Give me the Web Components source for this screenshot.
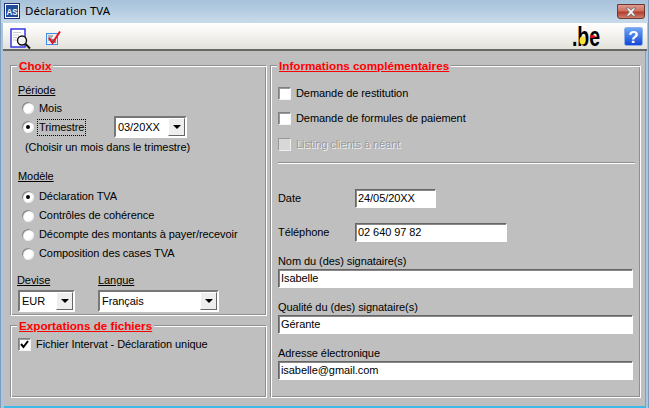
<!DOCTYPE html>
<html><head><meta charset="utf-8"><style>
html,body{margin:0;padding:0;width:649px;height:408px;overflow:hidden;background:#a9c6de}
</style></head><body>
<app-window>
  <title-bar slot="title" label="Déclaration TVA"></title-bar>
  <tool-bar slot="tools"></tool-bar>
  <div slot="left" style="display:flex;flex-direction:column;gap:9px;width:257px">
    <group-box label="Choix" style="height:251px">
      <sub-head style="margin-top:7px">Période</sub-head>
      <radio-opt style="margin-top:2px;height:16px">Mois</radio-opt>
      <div style="display:flex;align-items:center;height:22px">
        <radio-opt checked focused style="width:96px;flex:none">Trimestre</radio-opt>
        <combo-box value="03/20XX" style="width:73px;height:22px"></combo-box>
      </div>
      <div style="margin:2px 0 0 7px;height:15px;line-height:15px">(Choisir un mois dans le trimestre)</div>
      <sub-head style="margin-top:14px">Modèle</sub-head>
      <div style="margin-top:3px">
        <radio-opt checked style="height:19px">Déclaration TVA</radio-opt>
        <radio-opt style="height:19px">Contrôles de cohérence</radio-opt>
        <radio-opt style="height:19px">Décompte des montants à payer/recevoir</radio-opt>
        <radio-opt style="height:19px">Composition des cases TVA</radio-opt>
      </div>
      <div style="display:flex;margin:10px 0 0 -1px">
        <div style="width:81px"><sub-head>Devise</sub-head><combo-box value="EUR" style="width:57px;height:22px;margin:2px 0 0 1px"></combo-box></div>
        <div style="width:121px"><sub-head>Langue</sub-head><combo-box value="Français" style="width:121px;height:22px;margin-top:2px"></combo-box></div>
      </div>
    </group-box>
    <group-box label="Exportations de fichiers" style="height:73px">
      <check-opt checked style="margin-top:1px;height:15px">Fichier Intervat - Déclaration unique</check-opt>
    </group-box>
  </div>
  <group-box slot="right" label="Informations complémentaires" style="width:371px;height:333px">
    <div style="display:flex;flex-direction:column">
      <check-opt style="margin-top:5px;height:25px">Demande de restitution</check-opt>
      <check-opt style="height:25px">Demande de formules de paiement</check-opt>
      <check-opt disabled style="height:27px">Listing clients à néant</check-opt>
      <etched-line style="margin-top:4px;width:357px"></etched-line>
      <div style="display:flex;align-items:center;margin-top:25px;height:19px"><span style="width:77px">Date</span><text-field value="24/05/20XX" style="width:81px"></text-field></div>
      <div style="display:flex;align-items:center;margin-top:15px;height:19px"><span style="width:77px">Téléphone</span><text-field value="02 640 97 82" style="width:152px"></text-field></div>
      <div style="margin-top:11px;height:16px;line-height:16px">Nom du (des) signataire(s)</div>
      <text-field value="Isabelle" style="width:355px"></text-field>
      <div style="margin-top:11px;height:16px;line-height:16px">Qualité du (des) signataire(s)</div>
      <text-field value="Gérante" style="width:355px"></text-field>
      <div style="margin-top:11px;height:16px;line-height:16px">Adresse électronique</div>
      <text-field value="isabelle@gmail.com" style="width:355px"></text-field>
    </div>
  </group-box>
</app-window>
<script>
function def(name, css, html){
  customElements.define(name, class extends HTMLElement{
    connectedCallback(){
      if(this.shadowRoot) return;
      const s=this.attachShadow({mode:'open'});
      const a=n=>this.getAttribute(n)||'';
      s.innerHTML='<style>'+css+'</style>'+(typeof html==='function'?html(a,this):html);
    }
  });
}
def('app-window',`
 :host{display:block;width:649px;height:408px;font:11px/15px "Liberation Sans",Arial,sans-serif;letter-spacing:-.07px;color:#000;white-space:nowrap}
 .frame{display:flex;flex-direction:column;padding:0 2px 0 3px;background:#a9c6de;box-sizing:border-box;border-right:1px solid #7f9db8;border-left:1px solid #7f9db8;height:408px}
 .body{flex:1;min-height:0;background:#bfbfbf;padding:14px 4px 0 6px;display:flex;gap:3px;border-bottom:2px solid #3fb9e6;border-right:1px solid #3fb9e6}
`,`<div class="frame"><slot name="title"></slot><slot name="tools"></slot>
 <div class="body"><slot name="left"></slot><slot name="right"></slot></div></div>`);
def('title-bar',`
 :host{display:flex;align-items:center;height:23px;margin:0 -2px 0 -3px;padding:0 3px 1px 3px;box-sizing:border-box;background:linear-gradient(#a6c1d9,#c8dbea);position:relative}
 svg{display:block;flex:none}
 .t{margin-left:5px;font:11.5px/16px "Noto Sans","Open Sans",sans-serif;letter-spacing:0;color:#000}
 .x{position:absolute;right:3px;top:4px;width:28px;height:15px;border:1px solid #6b3a33;box-sizing:border-box;border-radius:0 0 3px 3px;background:linear-gradient(#dd9a8e 0,#d0705f 45%,#b33e2b 55%,#cf7f6d 100%);display:flex;align-items:center;justify-content:center}
`,a=>`<svg width="16" height="16" viewBox="0 0 16 16"><rect x=".5" y=".5" width="15" height="15" fill="#fff" stroke="#1b2f7a"/><rect x="2" y="2" width="12" height="12" fill="#1f4d9c"/><text x="8" y="11.5" text-anchor="middle" font-family="Liberation Sans" font-size="9" font-weight="bold" fill="#fff" textLength="11" lengthAdjust="spacingAndGlyphs">AS</text></svg>
 <span class="t">${a('label')}</span>
 <div class="x"><svg width="14" height="10" viewBox="0 0 14 10"><path d="M2 1h3l2 2.2L9 1h3L8.7 5 12 9H9L7 6.8 5 9H2l3.3-4z" fill="#f4f4f4" stroke="#6d6d6d" stroke-width=".8"/></svg></div>`);
def('tool-bar',`
 :host{display:flex;align-items:flex-start;height:28px;margin:0 -1px;padding:5px 4px 0 7px;box-sizing:border-box;background:linear-gradient(#fff 0,#f7f6f3 35%,#e3e1da 100%);border-bottom:2px solid #666}
 svg{flex:none;display:block}
 .sp{flex:1}
`,`<svg width="21" height="21" viewBox="0 0 21 21">
   <rect x="1" y="1" width="14" height="18" fill="#fff" stroke="#2a2ae0" stroke-width="1.4"/>
   <path d="M3.5 4.5h8M3.5 7h6M3.5 9.5h4M3.5 12h3" stroke="#999" stroke-dasharray="1 1"/>
   <circle cx="12" cy="12.5" r="4.5" fill="#f2f2f2" stroke="#111" stroke-width="1.4"/>
   <path d="M15.5 16l4.5 4.5" stroke="#111" stroke-width="2"/></svg>
 <svg width="16" height="16" viewBox="0 0 16 16" style="margin:2px 0 0 15px">
   <rect x=".5" y="3.5" width="11" height="11" fill="#eee" stroke="#3c8ce8"/>
   <path d="M2 6h5M2 8h4M2 10h3" stroke="#777"/><rect x="5" y="9" width="5" height="4" fill="#888"/>
   <path d="M3 8l3.5 5L14 1.5" fill="none" stroke="#e8102a" stroke-width="2"/></svg>
 <div class="sp"></div>
 <svg width="31" height="24" viewBox="0 0 31 24" style="margin:-3px 21px 0 0;overflow:visible">
   <text x="0" y="21" font-family="Liberation Sans" font-size="27" font-weight="bold" fill="#000" textLength="28" lengthAdjust="spacingAndGlyphs">.be</text>
   <ellipse cx="10.5" cy="15.5" rx="3" ry="4" fill="#f6e23c"/><ellipse cx="20.5" cy="11.5" rx="2.8" ry="1.6" fill="#e0102c"/></svg>
 <svg width="19" height="19" viewBox="0 0 19 19" style="margin-top:-1px">
   <defs><linearGradient id="h" x1="0" y1="0" x2="0" y2="1"><stop offset="0" stop-color="#6fa8f5"/><stop offset="1" stop-color="#1144d8"/></linearGradient></defs>
   <rect x=".5" y=".5" width="18" height="18" rx="2" fill="url(#h)" stroke="#8db0e8"/>
   <text x="9.5" y="15.5" text-anchor="middle" font-family="Liberation Sans" font-size="17" font-weight="bold" fill="#fff">?</text></svg>`);
def('group-box',`
 :host{display:block;flex:none;box-sizing:border-box;position:relative;border:1px solid;border-color:#8f8f8f #fff #fff #8f8f8f;box-shadow:inset 1px 1px 0 #fff,inset -1px -1px 0 #8f8f8f;padding:10px 6px 0 7px}
 .l{position:absolute;left:6px;top:-8px;background:#bfbfbf;padding:0 2px;font:bold 11.7px/16px "Liberation Sans",Arial,sans-serif;letter-spacing:0;color:#ff0000;text-decoration:underline}
`,a=>`<span class="l">${a('label')}</span><slot></slot>`);
def('sub-head',`:host{display:block;text-decoration:underline;line-height:15px}`,`<slot></slot>`);
def('radio-opt',`
 :host{display:flex;align-items:center;padding-left:4px;box-sizing:border-box}
 .c{width:12px;height:12px;border-radius:50%;background:#fff;box-shadow:inset 1px 1px 1px #777,inset -1px -1px 0 #eee;display:flex;align-items:center;justify-content:center;flex:none;margin-right:4px}
 .d{width:4px;height:4px;border-radius:50%;background:#000}
 .t{padding:0 1px}
 .f{outline:1px dotted #000;outline-offset:0}
`,(a,e)=>`<span class="c">${e.hasAttribute('checked')?'<span class="d"></span>':''}</span><span class="t ${e.hasAttribute('focused')?'f':''}"><slot></slot></span>`);
def('check-opt',`
 :host{display:flex;align-items:center;box-sizing:border-box}
 .b{width:13px;height:13px;box-sizing:border-box;background:#fff;border:1px solid;border-color:#808080 #f4f4f4 #f4f4f4 #808080;box-shadow:inset 1px 1px 0 #9a9a9a;margin-right:5px;flex:none;display:flex}
 :host([disabled]) .b{background:#d8d8d8;box-shadow:none;border-color:#999 #eee #eee #999}
 :host([disabled]) .t{color:#999;text-shadow:1px 1px 0 #f2f2f2}
`,(a,e)=>`<span class="b">${e.hasAttribute('checked')?'<svg width="11" height="11" viewBox="0 0 11 11"><path d="M2 5l2.5 3L9 2" fill="none" stroke="#000" stroke-width="2"/></svg>':''}</span><span class="t"><slot></slot></span>`);
def('combo-box',`
 :host{display:flex;box-sizing:border-box;background:#fff;border:2px solid;border-color:#777 #fff #fff #777}
 .v{flex:1;padding-left:2px;line-height:18px;white-space:nowrap;overflow:hidden}
 .b{width:17px;flex:none;box-sizing:border-box;background:#eeeeee;border:1px solid;border-color:#fff #666 #666 #fff;display:flex;align-items:center;justify-content:center}
 .b i{display:block;width:0;height:0;border:4px solid transparent;border-top:4px solid #000;border-bottom:0}
`,a=>`<span class="v">${a('value')}</span><span class="b"><i></i></span>`);
def('text-field',`
 :host{display:block;box-sizing:border-box;height:19px;background:#fff;border:1px solid;border-color:#666 #fff #fff #666;box-shadow:inset 1px 1px 0 #888;padding-left:2px;line-height:17px;white-space:nowrap;overflow:hidden;flex:none}
`,a=>a('value'));
def('etched-line',`:host{display:block;height:2px;box-sizing:border-box;background:#8f8f8f;border-bottom:1px solid #fff}`,``);
</script>
</body></html>
